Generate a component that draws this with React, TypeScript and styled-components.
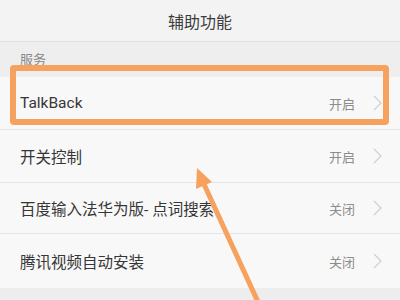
import React from "react";
import styled, { createGlobalStyle } from "styled-components";

const Global = createGlobalStyle`
  html, body { margin: 0; padding: 0; }
  body {
    width: 400px; height: 300px; overflow: hidden;
    background: #ededed;
    font-family: Roboto, "Noto Sans CJK SC", "Noto Sans", sans-serif;
  }
`;

const Screen = styled.div`
  position: relative;
  width: 400px;
  height: 300px;
  display: flex;
  flex-direction: column;
  background: #ededed;
  overflow: hidden;
`;

const Header = styled.div`
  height: 41px;
  flex: none;
  display: flex;
  align-items: center;
  justify-content: center;
  background: #f3f3f3;
  border-bottom: 1px solid #dedede;
  font-size: 16px;
  color: #3c3c3c;
`;

const SectionLabel = styled.div`
  height: 35px;
  flex: none;
  box-sizing: border-box;
  padding: 8px 0 0 20px;
  font-size: 13px;
  color: #8a8a8a;
  background: #eeeeee;
  line-height: 20px;
`;

const List = styled.div`
  display: flex;
  flex-direction: column;
  background: #f8f8f8;
  flex: none;
`;

const Row = styled.div<{ $h: number }>`
  height: ${(p) => p.$h}px;
  box-sizing: border-box;
  display: flex;
  align-items: center;
  padding: 0 18px 0 20px;
  border-bottom: 1px solid #e4e4e4;
  &:last-child { border-bottom: none; }
`;

const Title = styled.div`
  flex: 1;
  font-size: 15.5px;
  color: #363636;
  white-space: nowrap;
`;

const Value = styled.div`
  font-size: 13px;
  color: #8c8c8c;
  margin-right: 18px;
`;

const Chevron = () => (
  <svg width="9" height="16" viewBox="0 0 9 16">
    <path d="M1 1 L8 8 L1 15" fill="none" stroke="#cfcfcf" strokeWidth="1.2" />
  </svg>
);

const Highlight = styled.div`
  position: absolute;
  left: 10px;
  top: 65px;
  width: 379px;
  height: 60px;
  box-sizing: border-box;
  border: 6px solid #f6a15e;
  border-radius: 4px;
  pointer-events: none;
`;

const ArrowLayer = styled.svg`
  position: absolute;
  left: 0;
  top: 0;
  pointer-events: none;
`;

const rows = [
  { t: "TalkBack", v: "开启", h: 53 },
  { t: "开关控制", v: "开启", h: 53 },
  { t: "百度输入法华为版- 点词搜索", v: "关闭", h: 51 },
  { t: "腾讯视频自动安装", v: "关闭", h: 54 },
];

export default function App() {
  return (
    <>
      <Global />
      <Screen>
        <Header>辅助功能</Header>
        <SectionLabel>服务</SectionLabel>
        <List>
          {rows.map((r) => (
            <Row key={r.t} $h={r.h}>
              <Title>{r.t}</Title>
              <Value>{r.v}</Value>
              <Chevron />
            </Row>
          ))}
        </List>
        <Highlight />
        <ArrowLayer width="400" height="300" viewBox="0 0 400 300">
          <line x1="203" y1="182" x2="258" y2="302" stroke="#f6a15e" strokeWidth="5" />
          <polygon points="197,168 212,182 196,189" fill="#f6a15e" />
        </ArrowLayer>
      </Screen>
    </>
  );
}
